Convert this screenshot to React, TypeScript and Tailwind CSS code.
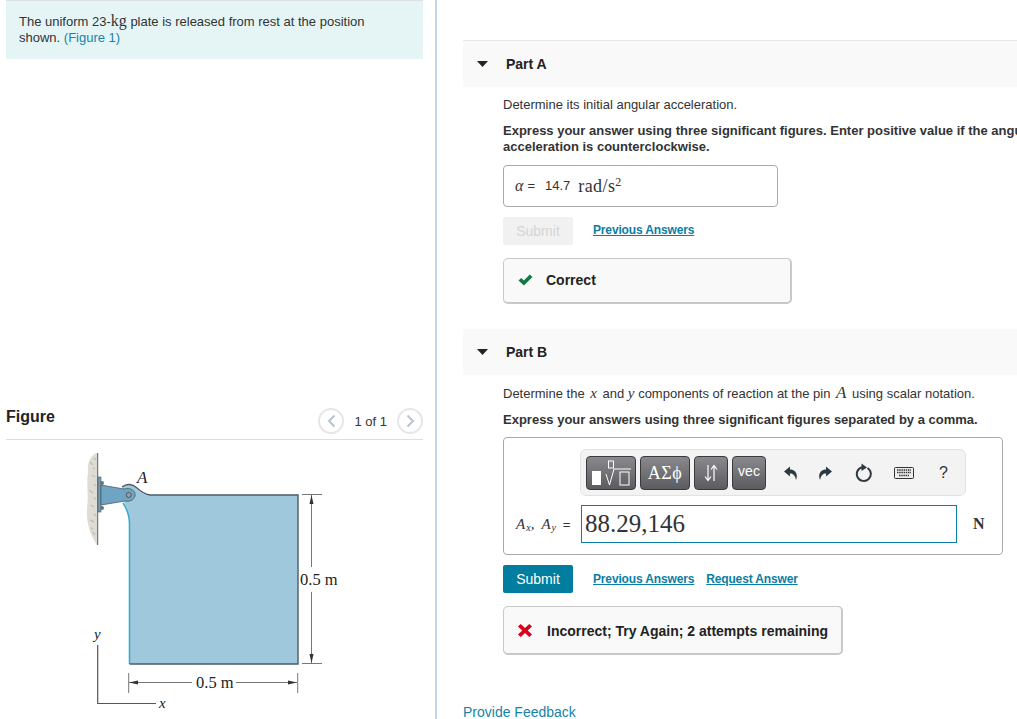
import React from 'react';

const serif = "font-['Liberation_Serif',serif]";

const Caret = () => (
  <svg width="11" height="6" viewBox="0 0 11 6" className="shrink-0">
    <path d="M0 0h11L5.500 6z" fill="#222" />
  </svg>
);

const PartHeader = ({ title }: { title: string }) => (
  <div className="flex items-center h-[46px] bg-[#f9f9f9] pl-[14px]">
    <Caret />
    <span className="ml-[18px] text-[14px] font-bold text-[#222]">{title}</span>
  </div>
);

const Link = ({ children }: { children: React.ReactNode }) => (
  <a className="text-[12px] font-bold underline text-[#0a7ea4] tracking-[-0.15px]">{children}</a>
);

const ToolButton = ({ w, children }: { w: string; children: React.ReactNode }) => (
  <div className={`${w} h-[34px] shrink-0 flex items-center justify-center rounded-[4px] border border-[#3a3a3a] bg-gradient-to-b from-[#8a8a8e] to-[#5c5c60] text-white`}>
    {children}
  </div>
);

const PlateFigure = () => (
  <svg width="417" height="279" viewBox="6 440 417 279" className="block">
    {/* wall */}
    <path d="M97 453 C91 455 87 462 88 472 C86 485 89 495 87 508 C86 522 90 535 97 545 Z" fill="#dedcd5" />
    <path d="M90 462 l3 3 M92 475 l3 2 M89 490 l4 3 M91 505 l3 2 M90 520 l4 2 M93 532 l2 3 M94 458 l2 2 M93 468 l2 1 M94 484 l2 2 M94 498 l2 1 M94 514 l2 2 M91 528 l2 1" stroke="#c4c1b8" strokeWidth="1.500" />
    <line x1="97.700" y1="453" x2="97.700" y2="545" stroke="#55595c" strokeWidth="1" />
    {/* plate */}
    <path d="M129.500 664 L129.500 522 C129 512 126 506 122 498 L122 488 C127 483 133 484 137 489 C141 494 146 495 152 495 L298 495 L298 664 Z" fill="#a0c8dd" />
    <path d="M123 503 C127 509 129.500 515 129.500 524 L129.500 664" fill="none" stroke="#3fa9c9" strokeWidth="1.600" />
    <path d="M129.500 664 L298 664 L298 495 L150 495 C144 494 141 492 137 488 C133 484 127 483 122 487" fill="none" stroke="#4d5b66" strokeWidth="1.400" />
    {/* bracket */}
    <rect x="98" y="477" width="3" height="35" fill="#6f9db8" stroke="#4d5b66" strokeWidth="0.600" />
    <circle cx="102" cy="483" r="2" fill="#6b7378" />
    <circle cx="102" cy="508" r="2" fill="#6b7378" />
    <path d="M101 485 L124 489 C131 487 136 491 135 496 C134 500 130 502 125 501 L101 505 Z" fill="#6fa5c3" stroke="#4d5b66" strokeWidth="0.800" />
    <circle cx="128.700" cy="495" r="2.500" fill="#9aa0a3" stroke="#444" strokeWidth="0.800" />
    <text x="137" y="483" fontSize="17" fontStyle="italic" fontFamily="Liberation Serif" fill="#222">A</text>
    {/* dimensions */}
    <g stroke="#777" strokeWidth="1" fill="none">
      <path d="M302 494.500 H322 M302 663.500 H322" />
      <path d="M311.500 495 V567 M311.500 592 V663" />
      <path d="M128.700 673 V693 M297.700 673 V693" />
      <path d="M129 682.500 H192 M236 682.500 H297" />
    </g>
    <path d="M311.500 495 l-2 9 h4z M311.500 663 l-2 -9 h4z M129 682.500 l9 -2 v4z M297 682.500 l-9 -2 v4z" fill="#333" />
    <text x="300" y="585" fontSize="16.500" fontFamily="Liberation Serif" fill="#222">0.5 m</text>
    <text x="196" y="688" fontSize="16.500" fontFamily="Liberation Serif" fill="#222">0.5 m</text>
    {/* axes */}
    <path d="M97.700 645 V703.500 H156" fill="none" stroke="#555" strokeWidth="1.200" />
    <text x="94" y="639" fontSize="15" fontStyle="italic" fontFamily="Liberation Serif" fill="#222">y</text>
    <text x="159" y="708" fontSize="15" fontStyle="italic" fontFamily="Liberation Serif" fill="#222">x</text>
  </svg>
);

const PagerCircle = ({ dir }: { dir: 'l' | 'r' }) => (
  <div className="w-[26px] h-[26px] rounded-full border-2 border-[#e6e6e6] flex items-center justify-center">
    <svg width="9" height="14" viewBox="0 0 9 14">
      <path d={dir === 'l' ? 'M7.500 1.500 L2 7 L7.500 12.500' : 'M1.500 1.500 L7 7 L1.500 12.500'} fill="none" stroke="#b9c4cf" strokeWidth="2" />
    </svg>
  </div>
);

const Toolbar = () => (
  <div className="ml-[76px] w-[386px] h-[47px] rounded-[6px] border border-[#e2e2e2] bg-[#f3f3f3] flex items-center pl-[5px]">
    <div className="flex gap-[4px]">
      <ToolButton w="w-[50px]">
        <svg width="44" height="28" viewBox="0 0 44 28">
          <rect x="3" y="12" width="9" height="14" fill="#fff" />
          <rect x="19.500" y="2" width="5" height="7" fill="none" stroke="#fff" />
          <path d="M17 15 l3.500 11 l4.500 -16 h17" fill="none" stroke="#fff" />
          <rect x="31" y="13" width="9" height="13" fill="none" stroke="#fff" />
        </svg>
      </ToolButton>
      <ToolButton w="w-[50px]">
        <span className={`${serif} text-[18px] tracking-[0.5px]`}>ΑΣϕ</span>
      </ToolButton>
      <ToolButton w="w-[34px]">
        <svg width="18" height="18" viewBox="0 0 18 18">
          <path d="M6 1v15M3 12.500l3 4 3-4M12 17V2M9 5.500l3-4 3 4" fill="none" stroke="#fff" strokeWidth="1.200" />
        </svg>
      </ToolButton>
      <ToolButton w="w-[34px]">
        <span className="text-[14px] -mt-[4px]">vec</span>
      </ToolButton>
    </div>
    <div className="flex items-center ml-[18px]">
      <svg width="14" height="16" viewBox="0 0 14 16" className="fill-[#2d3a42]">
        <path d="M6 1.500 L0 6.500 L6 11.500 V8.500 C9 8.500 11 10 12 15 C14.500 9 11 4.500 6 4.500 Z" />
      </svg>
      <svg width="14" height="16" viewBox="0 0 14 16" className="ml-[20px] fill-[#2d3a42]">
        <path d="M8 1.500 L14 6.500 L8 11.500 V8.500 C5 8.500 3 10 2 15 C-0.500 9 3 4.500 8 4.500 Z" />
      </svg>
      <svg width="18" height="20" viewBox="0 0 18 20" className="ml-[23px]">
        <path d="M7 4.200 A7 7 0 1 0 12.500 5" fill="none" stroke="#2d3a42" strokeWidth="2" />
        <path d="M6.500 0.500 L12 4.500 L6.500 8 Z" fill="#2d3a42" />
      </svg>
      <svg width="20" height="12" viewBox="0 0 20 12" className="ml-[21px]">
        <rect x="0.500" y="0.500" width="19" height="11" rx="1" fill="#eee" stroke="#333" />
        <path d="M3 3h14M3 5.500h14M5 8.500h10" stroke="#333" strokeWidth="1.300" strokeDasharray="1.500 0.700" />
      </svg>
      <span className="ml-[25px] text-[16px] text-[#333]">?</span>
    </div>
  </div>
);

export default function App() {
  return (
    <div className="flex w-[1017px] h-[719px] overflow-hidden bg-white font-['Liberation_Sans',sans-serif] text-[13px] leading-[16px] text-[#333]">
      {/* left column */}
      <div className="w-[437px] h-full shrink-0 border-r-2 border-[#c3d5e4] pl-[6px]">
        <div className="w-[417px] h-[59px] border-t border-[#dcdfe3] bg-[#e5f5f6] pl-[13px] pt-[12px] pr-[40px]">
          The uniform 23-<span className={`${serif} text-[16px]`}>kg</span> plate is released from rest at the position shown. <span className="text-[#1584a8]">(Figure 1)</span>
        </div>
        <div className="w-[417px] mt-[345px] h-[36px] pb-[2px] border-b border-[#dedede] flex items-center">
          <span className="text-[16px] font-bold text-[#222] -mt-[8px]">Figure</span>
          <div className="ml-auto flex items-center gap-[10px]">
            <PagerCircle dir="l" />
            <span className="text-[13px] text-[#333] mt-[2px]">1 of 1</span>
            <PagerCircle dir="r" />
          </div>
        </div>
        <PlateFigure />
      </div>

      {/* right column */}
      <div className="flex-1 min-w-0 pl-[26px] pt-[40px]">
        <div className="border-t border-[#e6e6e6]">
          <PartHeader title="Part A" />
        </div>
        <div className="pl-[40px]">
          <p className="mt-[10px]">Determine its initial angular acceleration.</p>
          <p className="mt-[10px] font-bold w-[560px]">
            Express your answer using three significant figures. Enter positive value if the angular acceleration is counterclockwise.
          </p>
          <div className="mt-[10px] w-[275px] h-[42px] rounded-[4px] border border-[#aaa] flex items-center pl-[11px]">
            <span className={`${serif} italic text-[16px]`}>α</span>
            <span className="ml-[4px]">=</span>
            <span className="ml-[10px]">14.7</span>
            <span className={`${serif} ml-[8px] text-[18px] tracking-[0.4px]`}>rad/s<sup className="text-[12px]">2</sup></span>
          </div>
          <div className="mt-[10px] flex items-center">
            <div className="w-[70px] h-[28px] rounded-[2px] bg-[#f1f1f1] text-[#d5d5d5] text-[14px] flex items-center justify-center">Submit</div>
            <div className="ml-[20px] -mt-[2px]"><Link>Previous Answers</Link></div>
          </div>
          <div className="mt-[13px] w-[289px] h-[46px] pb-[2px] rounded-[5px] border border-[#c8c8c8] border-r-2 border-b-2 bg-[#f9f9f9] flex items-center pl-[14px]">
            <svg width="15" height="12" viewBox="0 0 14 12" preserveAspectRatio="none">
              <path d="M0.500 6.500 L3 4 L5.500 6.500 L11 0.500 L13.500 3 L5.500 11.500 Z" fill="#0e7a43" />
            </svg>
            <span className="ml-[13px] text-[14px] font-bold text-[#222]">Correct</span>
          </div>
        </div>

        <div className="mt-[25px]">
          <PartHeader title="Part B" />
        </div>
        <div className="pl-[40px]">
          <p className="mt-[10px]">
            Determine the <span className={`${serif} italic text-[15px] px-[2px]`}>x</span> and <span className={`${serif} italic text-[15px]`}>y</span> components of reaction at the pin <span className={`${serif} italic text-[17px] px-[2px]`}>A</span> using scalar notation.
          </p>
          <p className="mt-[10px] font-bold whitespace-nowrap">Express your answers using three significant figures separated by a comma.</p>
          <div className="mt-[9px] w-[500px] h-[118px] rounded-[4px] border border-[#aaa] pt-[11px]">
            <Toolbar />
            <div className="mt-[9px] flex items-center">
              <span className={`${serif} italic text-[15px] w-[77px] pl-[12px] whitespace-nowrap`}>
                A<sub className="text-[10px] ml-[1px]">x</sub>,<span className="ml-[7px]">A</span><sub className="text-[10px] ml-[1px]">y</sub> <span className="not-italic text-[13px] ml-[3px] font-['Liberation_Sans',sans-serif]">=</span>
              </span>
              <div className={`${serif} w-[376px] h-[38px] border border-[#0a7ea4] pl-[3px] text-[25px] leading-[36px] text-[#333]`}>88.29,146</div>
              <span className={`${serif} ml-[16px] font-bold text-[16px]`}>N</span>
            </div>
          </div>
          <div className="mt-[10px] flex items-center">
            <div className="w-[70px] h-[28px] rounded-[2px] bg-[#007d9f] text-white text-[14px] flex items-center justify-center">Submit</div>
            <div className="ml-[20px]"><Link>Previous Answers</Link></div>
            <div className="ml-[12px]"><Link>Request Answer</Link></div>
          </div>
          <div className="mt-[13px] w-[340px] h-[49px] pt-[1px] rounded-[5px] border border-[#c8c8c8] border-r-2 border-b-2 bg-[#f9f9f9] flex items-center pl-[14px]">
            <svg width="14" height="13" viewBox="0 0 13 13" preserveAspectRatio="none">
              <path d="M2.500 0 L6.500 4 L10.500 0 L13 2.500 L9 6.500 L13 10.500 L10.500 13 L6.500 9 L2.500 13 L0 10.500 L4 6.500 L0 2.500 Z" fill="#d9001b" />
            </svg>
            <span className="ml-[15px] text-[14px] font-bold text-[#222]">Incorrect; Try Again; 2 attempts remaining</span>
          </div>
        </div>
        <p className="mt-[49px] text-[14px] text-[#1584a8]">Provide Feedback</p>
      </div>
    </div>
  );
}
